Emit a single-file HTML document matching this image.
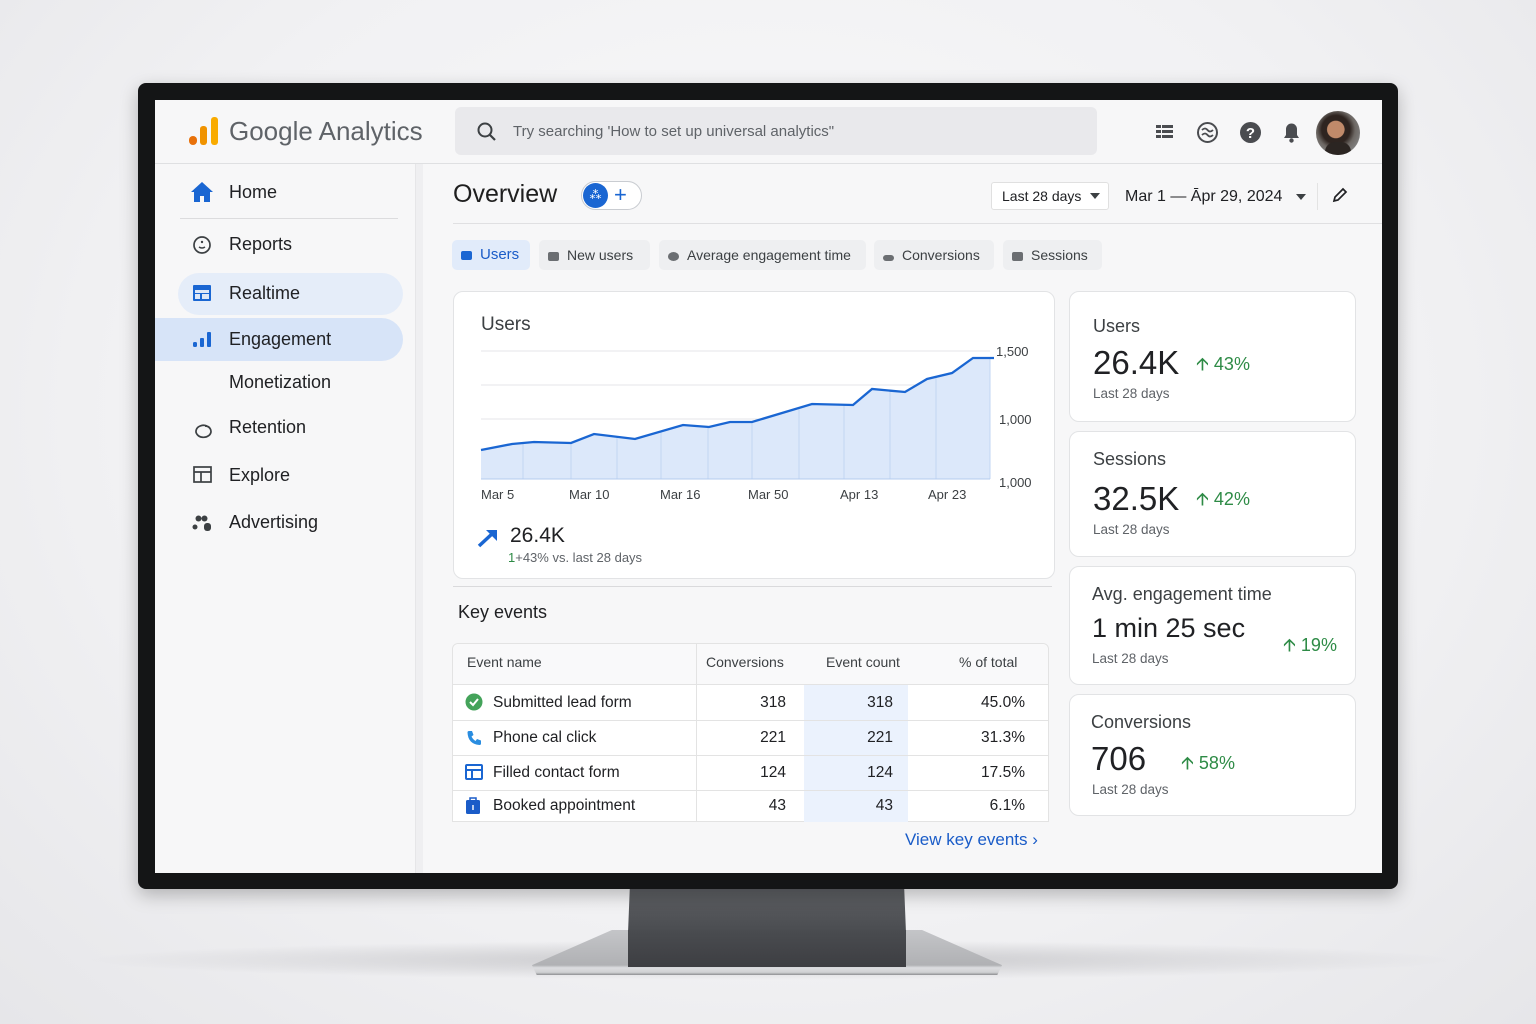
<!DOCTYPE html>
<html><head><meta charset="utf-8"><style>
*{box-sizing:border-box;margin:0;padding:0}
body{width:1536px;height:1024px;overflow:hidden;position:relative;font-family:"Liberation Sans",sans-serif;background:radial-gradient(ellipse at 50% 40%,#fafafb 0%,#f1f1f3 60%,#e6e6e9 100%);color:#202124}
.a{position:absolute;white-space:nowrap}
.t{position:absolute;white-space:nowrap;line-height:1}
.card{position:absolute;background:#fff;border:1px solid #e2e3e5;border-radius:10px}
.chip{position:absolute;top:240px;height:30px;border-radius:5px;background:#eeeff1;font-size:14px;color:#3c4043;line-height:30px;padding-left:9px}
.chip i{display:inline-block;width:11px;height:9px;background:#6b6e72;border-radius:2px;margin-right:8px;vertical-align:-1px}
.nav{position:absolute;left:229px;font-size:18px;color:#202124;line-height:1}
.tr{position:absolute;left:452px;width:597px;border-top:1px solid #e3e3e3}
.num{position:absolute;font-size:15.5px;line-height:1;text-align:right}
.up{color:#2e8b46}
</style></head><body>
<div class="a" style="left:80px;top:940px;width:1380px;height:40px;border-radius:50%;background:radial-gradient(ellipse,rgba(120,120,125,.35),rgba(200,200,205,0) 70%)"></div>
<div class="a" style="left:627px;top:888px;width:280px;height:70px;background:linear-gradient(#5e6064,#4b4d51 60%,#606266 70%,#434549);clip-path:polygon(1% 0,99% 0,100% 100%,0 100%)"></div>
<div class="a" style="left:532px;top:930px;width:470px;height:45px;background:linear-gradient(#c4c5c8,#b0b1b4 78%,#dcdde0 84%,#d0d1d3 94%,#8e8f92);clip-path:polygon(17% 0,83% 0,100% 78%,99% 100%,1% 100%,0 78%)"></div>
<div class="a" style="left:628px;top:930px;width:278px;height:37px;background:linear-gradient(#4a4c50,#3d3e42)"></div>
<div class="a" style="left:138px;top:83px;width:1260px;height:806px;background:#141516;border-radius:8px;box-shadow:0 6px 18px rgba(0,0,0,.25)"></div>
<div class="a" style="left:155px;top:100px;width:1227px;height:773px;background:#f7f7f8;overflow:hidden"></div>
<div class="a" style="left:155px;top:163px;width:1227px;height:1px;background:#dfe0e2"></div>
<div class="a" style="left:189px;top:136px;width:8px;height:9px;border-radius:4px;background:#e8710a"></div>
<div class="a" style="left:200px;top:126px;width:7px;height:19px;border-radius:3px;background:#f09300"></div>
<div class="a" style="left:211px;top:117px;width:7px;height:28px;border-radius:3px;background:#f9ab00"></div>
<div class="t" style="left:229px;top:118px;font-size:26px;color:#5f6368">Google Analytics</div>
<div class="a" style="left:455px;top:107px;width:642px;height:48px;background:#e9e9ec;border-radius:6px"></div>
<svg class="a" style="left:476px;top:121px" width="22" height="22" viewBox="0 0 22 22"><circle cx="9" cy="9" r="6.5" fill="none" stroke="#3c4043" stroke-width="2"/><path d="M14 14l5 5" stroke="#3c4043" stroke-width="2.2"/></svg>
<div class="t" style="left:513px;top:124px;font-size:15px;color:#5f6368">Try searching 'How to set up universal analytics"</div>
<svg class="a" style="left:1155px;top:123px" width="20" height="18" viewBox="0 0 20 18"><g fill="#4a4c50"><rect x="1" y="2" width="5" height="3"/><rect x="7" y="2" width="11" height="3"/><rect x="1" y="7" width="5" height="3"/><rect x="7" y="7" width="11" height="3"/><rect x="1" y="12" width="5" height="3"/><rect x="7" y="12" width="11" height="3"/></g></svg>
<svg class="a" style="left:1196px;top:121px" width="23" height="23" viewBox="0 0 23 23"><circle cx="11.5" cy="11.5" r="9.5" fill="none" stroke="#4a4c50" stroke-width="2"/><path d="M6 9q3-3 5.5 0t5.5 0M6 14q3-3 5.5 0t5.5 0" fill="none" stroke="#4a4c50" stroke-width="1.8"/></svg>
<svg class="a" style="left:1239px;top:121px" width="23" height="23" viewBox="0 0 23 23"><circle cx="11.5" cy="11.5" r="10.5" fill="#4a4c50"/><text x="11.5" y="17" font-size="15" font-weight="bold" fill="#fff" text-anchor="middle" font-family="Liberation Sans">?</text></svg>
<svg class="a" style="left:1281px;top:120px" width="21" height="24" viewBox="0 0 21 24"><path d="M3 18h15l-2-3v-6a5.5 5.5 0 0 0-11 0v6z" fill="#4a4c50"/><circle cx="10.5" cy="20.5" r="2.2" fill="#4a4c50"/></svg>
<div class="a" style="left:1316px;top:111px;width:44px;height:44px;border-radius:50%;background:radial-gradient(circle at 45% 42%,#c08a6a 0 24%,#2e2420 26% 40%,#6d6864 55%,#9a9fa3);overflow:hidden"><div class="a" style="left:9px;top:31px;width:26px;height:16px;background:#2b2522;border-radius:10px 10px 0 0"></div></div>
<div class="a" style="left:415px;top:164px;width:8px;height:709px;background:#efeff1;border-left:1px solid #e6e6e8"></div>
<svg class="a" style="left:190px;top:181px" width="24" height="22" viewBox="0 0 24 22"><path d="M12 1L1 11h3v10h6v-6h4v6h6V11h3z" fill="#1a66d2"/></svg>
<div class="nav" style="top:183px">Home</div>
<div class="a" style="left:180px;top:218px;width:218px;height:1px;background:#dcdcde"></div>
<svg class="a" style="left:192px;top:235px" width="20" height="20" viewBox="0 0 20 20"><circle cx="10" cy="10" r="8" fill="none" stroke="#3c4043" stroke-width="1.7"/><circle cx="10" cy="7" r="1.2" fill="#3c4043"/><path d="M7 12q3 2 6 0" stroke="#3c4043" stroke-width="1.5" fill="none"/></svg>
<div class="nav" style="top:235px">Reports</div>
<div class="a" style="left:178px;top:273px;width:225px;height:42px;border-radius:21px;background:#e5edf9"></div>
<svg class="a" style="left:192px;top:284px" width="20" height="18" viewBox="0 0 20 18"><rect x="1" y="1" width="18" height="16" rx="1" fill="#1a66d2"/><rect x="3" y="6" width="14" height="3" fill="#dfe8f7"/><rect x="3" y="10" width="5" height="5" fill="#dfe8f7"/><rect x="10" y="10" width="7" height="5" fill="#dfe8f7"/></svg>
<div class="nav" style="top:284px">Realtime</div>
<div class="a" style="left:155px;top:318px;width:248px;height:43px;border-radius:0 22px 22px 0;background:#d7e4f8"></div>
<svg class="a" style="left:192px;top:331px" width="20" height="17" viewBox="0 0 20 17"><rect x="1" y="11" width="4" height="5" rx="1.5" fill="#1a66d2"/><rect x="8" y="7" width="4" height="9" rx="1" fill="#1a66d2"/><rect x="15" y="1" width="4" height="15" rx="1" fill="#1a66d2"/></svg>
<div class="nav" style="top:330px">Engagement</div>
<div class="nav" style="top:373px">Monetization</div>
<svg class="a" style="left:192px;top:419px" width="22" height="20" viewBox="0 0 22 20"><path d="M15 7a7.5 6 0 1 0 4 5" fill="none" stroke="#3c4043" stroke-width="1.7"/><path d="M13 7q5 0 6 5" fill="none" stroke="#3c4043" stroke-width="1.7"/></svg>
<div class="nav" style="top:418px">Retention</div>
<svg class="a" style="left:193px;top:466px" width="20" height="18" viewBox="0 0 20 18"><rect x="1" y="1" width="17" height="15" fill="none" stroke="#3c4043" stroke-width="1.7"/><path d="M1 6h17M8 6v10" stroke="#3c4043" stroke-width="1.7"/></svg>
<div class="nav" style="top:466px">Explore</div>
<svg class="a" style="left:192px;top:514px" width="22" height="18" viewBox="0 0 22 18"><circle cx="6.5" cy="4.5" r="3" fill="#3c4043"/><circle cx="12.5" cy="4.5" r="3" fill="#3c4043"/><circle cx="3" cy="13" r="2.5" fill="#3c4043"/><rect x="12" y="9" width="7" height="8" rx="3" fill="#3c4043"/></svg>
<div class="nav" style="top:513px">Advertising</div>
<div class="t" style="left:453px;top:182px;font-size:25px;color:#1f1f1f">Overview</div>
<div class="a" style="left:581px;top:181px;width:61px;height:29px;border-radius:15px;border:1px solid #c9ccd1;background:#fff"></div>
<div class="a" style="left:583px;top:183px;width:25px;height:25px;border-radius:50%;background:#1a66d2;color:#fff;font-size:12px;text-align:center;line-height:25px">&#8258;</div>
<div class="t" style="left:614px;top:184px;font-size:22px;color:#1a66d2">+</div>
<div class="a" style="left:453px;top:223px;width:929px;height:1px;background:#e0e0e2"></div>
<div class="a" style="left:991px;top:182px;width:118px;height:28px;background:#fff;border:1px solid #e0e0e0;border-radius:3px"></div>
<div class="t" style="left:1002px;top:189px;font-size:14px;color:#202124">Last 28 days</div>
<div class="a" style="left:1090px;top:193px;border:5px solid transparent;border-top:6px solid #3c4043"></div>
<div class="t" style="left:1125px;top:189px;font-size:16px;color:#202124">Mar 1 — Āpr 29, 2024</div>
<div class="a" style="left:1296px;top:194px;border:5px solid transparent;border-top:6px solid #3c4043"></div>
<div class="a" style="left:1317px;top:183px;width:1px;height:27px;background:#e3e3e3"></div>
<svg class="a" style="left:1331px;top:186px" width="18" height="18" viewBox="0 0 18 18"><path d="M3 15l1-4 8-8 3 3-8 8z" fill="none" stroke="#202124" stroke-width="1.7"/></svg>
<div class="chip" style="left:452px;width:78px;background:#e1ebfa;color:#1a5cc8;font-size:15px"><i style="background:#1a66d2"></i>Users</div>
<div class="chip" style="left:539px;width:111px"><i></i>New users</div>
<div class="chip" style="left:659px;width:207px"><i style="border-radius:50%"></i>Average engagement time</div>
<div class="chip" style="left:874px;width:120px"><i style="height:6px;border-radius:3px"></i>Conversions</div>
<div class="chip" style="left:1003px;width:99px"><i></i>Sessions</div>
<div class="card" style="left:453px;top:291px;width:602px;height:288px"></div>
<div class="t" style="left:481px;top:315px;font-size:19px;color:#3c4043">Users</div>
<svg class="a" style="left:470px;top:340px" width="580" height="170" viewBox="470 340 580 170">
<g stroke="#e4e6ea" stroke-width="1"><line x1="481" y1="351" x2="990" y2="351"/><line x1="481" y1="385" x2="990" y2="385"/><line x1="481" y1="419" x2="990" y2="419"/><line x1="481" y1="454" x2="990" y2="454"/></g>
<path d="M481 450L512 444 534 442 571 443 594 434 635 439 683 425 709 427 730 422 752 422 812 404 853 405 872 389 905 392 927 379 952 373 973 358 990 358V479H481Z" fill="#dce8fa"/>
<g stroke="#c2d6f3" stroke-width="1"><line x1="523" y1="443" x2="523" y2="479"/><line x1="571" y1="443" x2="571" y2="479"/><line x1="617" y1="437" x2="617" y2="479"/><line x1="661" y1="431" x2="661" y2="479"/><line x1="708" y1="427" x2="708" y2="479"/><line x1="752" y1="422" x2="752" y2="479"/><line x1="799" y1="408" x2="799" y2="479"/><line x1="844" y1="405" x2="844" y2="479"/><line x1="890" y1="390" x2="890" y2="479"/><line x1="936" y1="376" x2="936" y2="479"/><line x1="990" y1="358" x2="990" y2="479"/><line x1="481" y1="479" x2="990" y2="479" stroke="#b3cbef"/></g>
<path d="M481 450L512 444 534 442 571 443 594 434 635 439 683 425 709 427 730 422 752 422 812 404 853 405 872 389 905 392 927 379 952 373 973 358 994 358" fill="none" stroke="#1a66d2" stroke-width="2.3"/>
</svg>
<div class="t" style="left:996px;top:345px;font-size:13px;color:#3c4043">1,500</div>
<div class="t" style="left:999px;top:413px;font-size:13px;color:#3c4043">1,000</div>
<div class="t" style="left:999px;top:476px;font-size:13px;color:#3c4043">1,000</div>
<div class="t" style="left:481px;top:488px;font-size:13px;color:#3c4043">Mar 5</div>
<div class="t" style="left:569px;top:488px;font-size:13px;color:#3c4043">Mar 10</div>
<div class="t" style="left:660px;top:488px;font-size:13px;color:#3c4043">Mar 16</div>
<div class="t" style="left:748px;top:488px;font-size:13px;color:#3c4043">Mar 50</div>
<div class="t" style="left:840px;top:488px;font-size:13px;color:#3c4043">Apr 13</div>
<div class="t" style="left:928px;top:488px;font-size:13px;color:#3c4043">Apr 23</div>
<svg class="a" style="left:477px;top:528px" width="22" height="20" viewBox="0 0 22 20"><path d="M2 18L16 5" stroke="#1a66d2" stroke-width="3.5"/><path d="M9 2h11v11z" fill="#1a66d2"/></svg>
<div class="t" style="left:510px;top:525px;font-size:21px;color:#202124">26.4K</div>
<div class="t" style="left:508px;top:551px;font-size:13px;color:#5f6368"><span class="up">1</span>+43% vs. last 28 days</div>
<div class="a" style="left:453px;top:586px;width:599px;height:1px;background:#dadadc"></div>
<div class="t" style="left:458px;top:603px;font-size:18px;color:#202124">Key events</div>
<div class="a" style="left:452px;top:643px;width:597px;height:179px;background:#fff;border:1px solid #e3e3e3;border-radius:6px 6px 0 0"></div>
<div class="a" style="left:453px;top:644px;width:595px;height:40px;background:#f9f9fa;border-radius:6px 6px 0 0"></div>
<div class="a" style="left:804px;top:685px;width:104px;height:137px;background:#ebf2fd"></div>
<div class="a" style="left:696px;top:643px;width:1px;height:179px;background:#e3e3e3"></div>
<div class="tr" style="top:684px"></div><div class="tr" style="top:720px"></div><div class="tr" style="top:755px"></div><div class="tr" style="top:790px"></div>
<div class="t" style="left:467px;top:655px;font-size:14px;color:#3c4043">Event name</div>
<div class="t" style="left:706px;top:655px;font-size:14px;color:#3c4043">Conversions</div>
<div class="t" style="left:826px;top:655px;font-size:14px;color:#3c4043">Event count</div>
<div class="t" style="left:959px;top:655px;font-size:14px;color:#3c4043">% of total</div>
<svg class="a" style="left:465px;top:693px" width="18" height="18"><circle cx="9" cy="9" r="8.5" fill="#44a35a"/><path d="M5 9l3 3 5-6" stroke="#fff" stroke-width="2" fill="none"/></svg>
<svg class="a" style="left:465px;top:729px" width="18" height="18" viewBox="0 0 18 18"><path d="M4 2h3l1.5 4-2 1.5q1.5 3 4 4.5l1.5-2 4 1.5v3q0 1.5-1.5 1.5Q3 15 2.5 3.5 2.5 2 4 2z" fill="#2a8de0"/></svg>
<svg class="a" style="left:465px;top:764px" width="18" height="17" viewBox="0 0 18 17"><rect x="1" y="1" width="16" height="14" rx="1" fill="none" stroke="#1a66d2" stroke-width="2"/><path d="M1 6h16M7 6v9" stroke="#1a66d2" stroke-width="2"/></svg>
<svg class="a" style="left:465px;top:797px" width="16" height="18" viewBox="0 0 16 18"><rect x="1" y="3" width="14" height="14" rx="1.5" fill="#1a5cc8"/><rect x="5" y="1" width="6" height="3" fill="none" stroke="#1a5cc8" stroke-width="1.5"/><rect x="7.3" y="8" width="1.4" height="5" fill="#fff"/></svg>
<div class="t" style="left:493px;top:695px;font-size:15.5px">Submitted lead form</div>
<div class="t" style="left:493px;top:730px;font-size:15.5px">Phone cal click</div>
<div class="t" style="left:493px;top:765px;font-size:15.5px">Filled contact form</div>
<div class="t" style="left:493px;top:798px;font-size:15.5px">Booked appointment</div>
<div class="num" style="left:700px;width:86px;top:695px">318</div><div class="num" style="left:800px;width:93px;top:695px">318</div><div class="num" style="left:920px;width:105px;top:695px">45.0%</div>
<div class="num" style="left:700px;width:86px;top:730px">221</div><div class="num" style="left:800px;width:93px;top:730px">221</div><div class="num" style="left:920px;width:105px;top:730px">31.3%</div>
<div class="num" style="left:700px;width:86px;top:765px">124</div><div class="num" style="left:800px;width:93px;top:765px">124</div><div class="num" style="left:920px;width:105px;top:765px">17.5%</div>
<div class="num" style="left:700px;width:86px;top:798px">43</div><div class="num" style="left:800px;width:93px;top:798px">43</div><div class="num" style="left:920px;width:105px;top:798px">6.1%</div>
<div class="t" style="left:905px;top:831px;font-size:17px;color:#1a5cc8">View key events ›</div>
<div class="card" style="left:1069px;top:291px;width:287px;height:131px"></div>
<div class="t" style="left:1093px;top:317px;font-size:18px;color:#3c4043">Users</div>
<div class="t" style="left:1093px;top:346px;font-size:33px;color:#202124">26.4K</div>
<div class="t up" style="left:1196px;top:355px;font-size:18px">&#129129; 43%</div>
<div class="t" style="left:1093px;top:387px;font-size:13.5px;color:#5f6368">Last 28 days</div>
<div class="card" style="left:1069px;top:431px;width:287px;height:126px"></div>
<div class="t" style="left:1093px;top:450px;font-size:18px;color:#3c4043">Sessions</div>
<div class="t" style="left:1093px;top:482px;font-size:33px;color:#202124">32.5K</div>
<div class="t up" style="left:1196px;top:490px;font-size:18px">&#129129; 42%</div>
<div class="t" style="left:1093px;top:523px;font-size:13.5px;color:#5f6368">Last 28 days</div>
<div class="card" style="left:1069px;top:566px;width:287px;height:119px"></div>
<div class="t" style="left:1092px;top:585px;font-size:18px;color:#3c4043">Avg. engagement time</div>
<div class="t" style="left:1092px;top:615px;font-size:27px;color:#202124">1 min 25 sec</div>
<div class="t up" style="left:1283px;top:636px;font-size:18px">&#129129; 19%</div>
<div class="t" style="left:1092px;top:652px;font-size:13.5px;color:#5f6368">Last 28 days</div>
<div class="card" style="left:1069px;top:694px;width:287px;height:122px"></div>
<div class="t" style="left:1091px;top:713px;font-size:18px;color:#3c4043">Conversions</div>
<div class="t" style="left:1091px;top:742px;font-size:33px;color:#202124">706</div>
<div class="t up" style="left:1181px;top:754px;font-size:18px">&#129129; 58%</div>
<div class="t" style="left:1092px;top:783px;font-size:13.5px;color:#5f6368">Last 28 days</div>
</body></html>
